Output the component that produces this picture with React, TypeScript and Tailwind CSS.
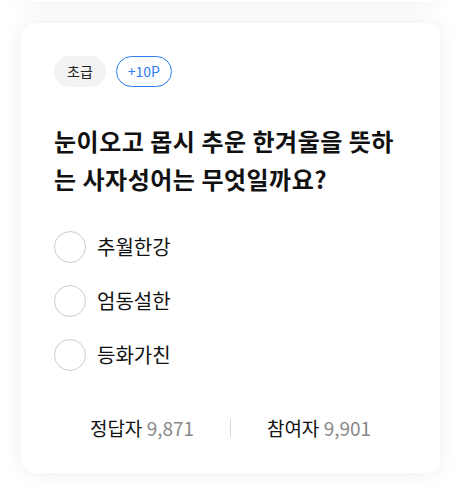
import { useState } from 'react';

const options = ['추월한강', '엄동설한', '등화가친'];

export default function App() {
  const [selected, setSelected] = useState<number | null>(null);

  return (
    <div
      className="min-h-screen bg-white overflow-hidden"
      style={{ fontFamily: '"Noto Sans CJK KR", "Noto Sans", sans-serif' }}
    >
      <div className="flex flex-col gap-[21px] pl-[21px] pr-[25px] pb-8">
        {/* previous card, scrolled out of view */}
        <div className="h-[40px] -mt-[38px] rounded-[14px] bg-white shadow-[0_0_22px_rgba(0,0,0,0.07)]" />

        {/* Quiz card */}
        <div className="h-[450px] rounded-[14px] bg-white shadow-[0_0_22px_rgba(0,0,0,0.07)] px-[33px] pt-[33px]">
          <div className="flex items-center gap-[10px]">
            <span className="h-[31px] px-[13px] flex items-center rounded-full bg-[#f3f3f3] text-[14px] text-[#222]">
              초급
            </span>
            <span className="h-[31px] px-[11px] flex items-center rounded-full border-[1.5px] border-[#2f7cf0] text-[14px] text-[#2f7cf0]">
              +10P
            </span>
          </div>

          <h2 className="mt-[35px] text-[24px] leading-[38px] font-bold text-[#111] break-all tracking-[0.5px]">
            눈이오고 몹시 추운 한겨울을 뜻하는 사자성어는 무엇일까요?
          </h2>

          <ul className="mt-[33px] flex flex-col gap-[22px]">
            {options.map((opt, i) => (
              <li key={opt}>
                <button
                  onClick={() => setSelected(i)}
                  className="flex items-center gap-[11px]"
                >
                  <span
                    className={`w-[32px] h-[32px] rounded-full border-[1.5px] ${
                      selected === i ? 'border-[#2f7cf0]' : 'border-[#cccccc]'
                    }`}
                  />
                  <span className="text-[20px] text-[#111]">{opt}</span>
                </button>
              </li>
            ))}
          </ul>

          <div className="mt-[43px] flex items-center text-[19px]">
            <div className="flex-1 text-center">
              <span className="text-[#111]">정답자</span>{' '}
              <span className="text-[#888]">9,871</span>
            </div>
            <span className="w-px h-[18px] bg-[#d8d8d8]" />
            <div className="flex-1 text-center">
              <span className="text-[#111]">참여자</span>{' '}
              <span className="text-[#888]">9,901</span>
            </div>
          </div>
        </div>
      </div>
    </div>
  );
}
